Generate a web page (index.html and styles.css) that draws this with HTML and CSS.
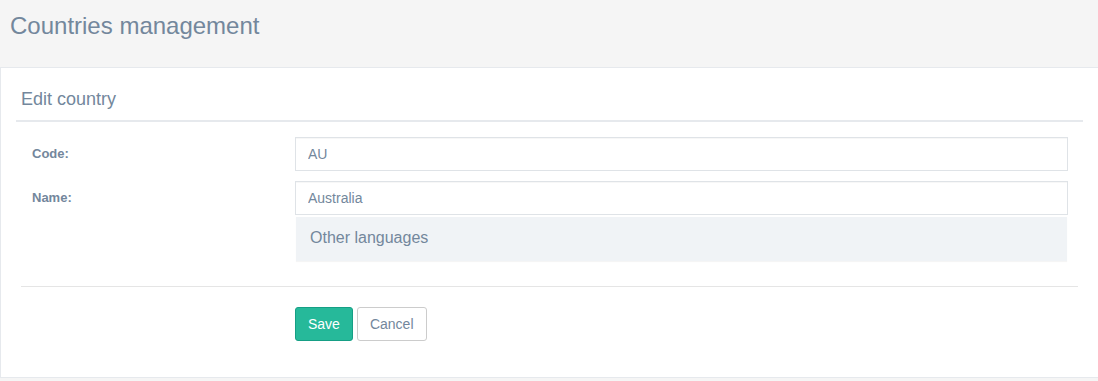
FILE: index.html
```html
<!DOCTYPE html>
<html lang="en">
<head>
  <meta charset="UTF-8" />
  <title>Countries management</title>
  <link rel="stylesheet" href="styles.css">
</head>
<body>

  <!-- PAGE TITLE -->
  <div class="page-title">
    <h3>Countries management</h3>
  </div>

  <div class="x-panel">
    <div class="x-title">
      <h2>Edit country</h2>
    </div>

    <form class="edit-form">
      <div class="form-row">
        <label for="code">Code:</label>
        <input type="text" id="code" value="AU">
      </div>

      <div class="form-row">
        <label for="name">Name:</label>
        <div class="field">
          <input type="text" id="name" value="Australia">
          <div class="langs">Other languages</div>
        </div>
      </div>

      <div class="ln-solid"></div>

      <div class="form-row actions">
        <span></span>
        <div class="buttons">
          <button type="submit" class="btn-save">Save</button>
          <button type="button" class="btn-cancel">Cancel</button>
        </div>
      </div>
    </form>
  </div>

</body>
</html>
```

FILE: styles.css
```css
body {
  font-family: "Liberation Sans", Arial, sans-serif;
  font-size: 13px;
  color: #73879c;
  margin: 0;
  background: #f5f5f5;
  overflow: hidden;
}

/* PAGE TITLE */
.page-title {
  height: 67px;
  padding: 0 10px;
}

.page-title h3 {
  margin: 0;
  padding-top: 12px;
  font-size: 24px;
  font-weight: 400;
  line-height: 28px;
}

/* PANEL */
.x-panel {
  background: #fff;
  border: 1px solid #e6e9ed;
  padding: 0 15px 36px 15px;
  margin-right: -1px;
}

.x-title {
  border-bottom: 2px solid #e6e9ed;
  padding: 20px 5px 10px 5px;
}

.x-title h2 {
  margin: 0;
  font-size: 18px;
  font-weight: 400;
  line-height: 22px;
}

.edit-form {
  padding-top: 15px;
}

.form-row {
  display: grid;
  grid-template-columns: 279px 1fr;
  align-items: start;
  padding: 0 15px 0 0;
  margin-bottom: 10px;
}

.form-row label {
  font-weight: bold;
  font-size: 13px;
  padding-left: 16px;
  line-height: 34px;
}

input {
  box-sizing: border-box;
  width: 100%;
  height: 34px;
  border: 1px solid #dfe3e7;
  padding: 6px 12px;
  font-family: inherit;
  font-size: 14px;
  color: #73879c;
  box-shadow: inset 0 1px 0 rgba(0,0,0,0.03);
}

.field {
  display: flex;
  flex-direction: column;
  gap: 2px;
}

.langs {
  margin: 0 1px;
  height: 44px;
  line-height: 42px;
  background: #f0f3f6;
  padding: 0 14px;
  font-size: 16px;
  box-shadow: 0 1px 1px rgba(0,0,0,0.04);
}

.ln-solid {
  border-top: 1px solid #e5e5e5;
  margin: 25px 5px 20px 5px;
}

.actions {
  margin-bottom: 0;
}

.buttons {
  display: flex;
  gap: 4px;
}

.buttons button {
  height: 34px;
  padding: 0 12px;
  font-family: inherit;
  font-size: 14px;
  border-radius: 3px;
  cursor: pointer;
}

.btn-save {
  background-color: #26b99a;
  border: 1px solid #169f85;
  color: #fff;
}

.btn-cancel {
  background: #fff;
  border: 1px solid #ccc;
  color: #73879c;
}
```
